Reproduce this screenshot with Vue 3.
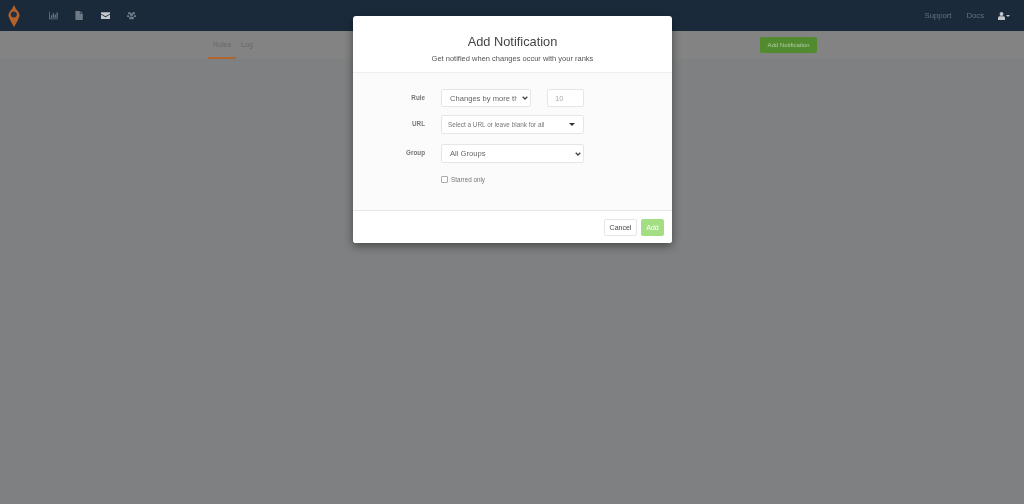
<template>
  <div class="page">
    <header class="navbar">
      <svg class="logo soft" viewBox="0 0 12 22">
        <path d="M6 0 L8 4 Q12 8 11.500 11 Q10 16 6 22 Q2 16 .5 11 Q0 8 4 4 Z" fill="#b5622a" />
        <circle cx="5.800" cy="9.500" r="3" fill="#1f3147" />
      </svg>
      <nav class="nav-icons soft">
        <svg viewBox="0 0 12 10" class="nav-icon"><path d="M0 0h1v9h11v1H0zM2.500 4.500h1.600V8H2.500zM5 2h1.600v6H5zM7.500 3.500h1.600V8H7.500zM10 1h1.600v7H10z" /></svg>
        <svg viewBox="0 0 10 11" class="nav-icon"><path d="M0 0h5.500v3.500H9V11H0zM6.300 0 9 2.700H6.300z" /></svg>
        <svg viewBox="0 0 12 9" class="nav-icon bright"><path d="M0 0h12v2L6 5.500 0 2zM0 3.200 6 6.700l6-3.500V9H0z" /></svg>
        <svg viewBox="0 0 12 10" class="nav-icon"><circle cx="3.200" cy="2" r="1.800" /><circle cx="8.800" cy="2" r="1.800" /><circle cx="6" cy="4" r="2" /><path d="M0 4.500h2.500L3 7H0zM9.500 4.500H12V7H9zM3 6.500h6V10H3z" /></svg>
      </nav>
      <div class="nav-right soft">
        <span>Support</span>
        <span>Docs</span>
        <span class="user">
          <svg viewBox="0 0 8 9" class="user-icon"><circle cx="4" cy="2.200" r="2.200" /><path d="M0 9V6.500Q0 5 1.800 4.800h4.400Q8 5 8 6.500V9z" /></svg>
          <i class="caret"></i>
        </span>
      </div>
    </header>
    <div class="subnav">
      <div class="tabs">
        <span class="tab active"><span class="soft">Rules</span></span>
        <span class="tab"><span class="soft">Log</span></span>
      </div>
      <button class="add-top"><span class="soft">Add Notification</span></button>
    </div>

    <div class="modal">
      <div class="modal-head">
        <h2>Add Notification</h2>
        <p>Get notified when changes occur with your ranks</p>
      </div>
      <form class="modal-body" @submit.prevent>
        <div class="row row-rule">
          <label>Rule</label>
          <div class="rule-fields">
            <select class="field select rule-select">
              <option>Changes by more than</option>
            </select>
            <input class="field num" type="text" placeholder="10" />
          </div>
        </div>
        <div class="row row-url">
          <label>URL</label>
          <div class="field fake-select">
            <span>Select a URL or leave blank for all</span>
            <i class="caret dark"></i>
          </div>
        </div>
        <div class="row row-group">
          <label>Group</label>
          <select class="field select">
            <option>All Groups</option>
          </select>
        </div>
        <div class="row row-check">
          <span></span>
          <label class="check"><input type="checkbox" /> Starred only</label>
        </div>
      </form>
      <div class="modal-foot">
        <button class="btn">Cancel</button>
        <button class="btn primary">Add</button>
      </div>
    </div>
  </div>
</template>

<script setup>
</script>

<style>
html, body { margin: 0; background: #7f8081; }
</style>

<style scoped>
* { box-sizing: border-box; }
.page {
  position: relative;
  height: 504px;
  overflow: hidden;
  background: #7f8081;
  font-family: "Liberation Sans", Arial, sans-serif;
}
.soft { filter: blur(0.6px); }
.navbar {
  height: 31px;
  background: #1b2a3b;
  display: flex;
  align-items: center;
  padding-left: 8px;
  padding-right: 14px;
}
.logo { width: 12px; height: 22px; }
.nav-icons { display: flex; align-items: center; gap: 17px; margin-left: 29px; }
.nav-icon { width: 9px; height: 9px; fill: #6f7a85; }
.nav-icon.bright { fill: #c4c8cc; }
.nav-right {
  margin-left: auto;
  display: flex;
  align-items: center;
  gap: 15px;
  font-size: 7.700px;
  color: #65717e;
}
.user { display: flex; align-items: center; gap: 1px; margin-left: -1px; }
.user-icon { width: 7px; height: 8px; fill: #c4c8cc; }
.caret {
  display: inline-block;
  width: 0;
  height: 0;
  border: 2.500px solid transparent;
  border-top-color: #c4c8cc;
  border-bottom: 0;
}
.subnav {
  height: 28px;
  background: #838383;
  display: flex;
  align-items: stretch;
  padding-left: 208px;
  padding-right: 207px;
}
.tabs { display: flex; font-size: 7.200px; color: #64676b; }
.tab { display: flex; align-items: center; padding: 0 5px; border-bottom: 2px solid transparent; }
.tab.active { border-bottom-color: #b0652f; width: 28px; }
.add-top {
  margin-left: auto;
  align-self: flex-start;
  margin-top: 6px;
  width: 57px;
  height: 16px;
  padding: 0;
  border: 0;
  border-radius: 2px;
  background: #528a30;
  color: #b4cca6;
  font: 6px "Liberation Sans", Arial, sans-serif;
}

.modal {
  position: absolute;
  left: 353px;
  top: 16px;
  width: 319px;
  background: #fff;
  border-radius: 3px;
  box-shadow: 0 3px 10px rgba(0, 0, 0, 0.45);
  overflow: hidden;
  filter: blur(0.25px);
}
.modal-head {
  height: 57px;
  padding-top: 18px;
  text-align: center;
  border-bottom: 1px solid #eee;
}
.modal-head h2 { margin: 0; font-size: 12.800px; font-weight: 400; line-height: 15px; color: #444; }
.modal-head p { margin: 5px 0 0; font-size: 7.500px; line-height: 10px; color: #555; }

.modal-body {
  height: 138px;
  background: #fbfbfb;
  border-bottom: 1px solid #e8e8e8;
  padding-top: 16px;
}
.row { display: grid; grid-template-columns: 72px 143px; column-gap: 16px; align-items: center; }
.row > label:first-child {
  justify-self: end;
  padding-bottom: 2px;
  font-size: 6.300px;
  font-weight: 700;
  color: #777;
}
.row-url { margin-top: 8px; }
.row-group { margin-top: 10px; }
.row-check { margin-top: 13px; }
.field {
  height: 18px;
  width: 100%;
  margin: 0;
  border: 1px solid #e6e6e6;
  border-radius: 2px;
  background: #fff;
  font: 7.600px "Liberation Sans", Arial, sans-serif;
  color: #666;
  padding: 0 0 0 8px;
}
.select {
  appearance: none;
  background: #fff url("data:image/svg+xml,%3Csvg xmlns='http://www.w3.org/2000/svg' viewBox='0 0 6 4'%3E%3Cpath d='M.7.7 3 3l2.300-2.300' fill='none' stroke='%23444' stroke-width='1.300'/%3E%3C/svg%3E") no-repeat right 2px center / 6px 4px;
}
.rule-fields { display: flex; justify-content: space-between; }
.rule-select { width: 90px; padding-right: 13px; }
.num { width: 37px; padding-left: 7px; }
.num::placeholder { color: #aaa; }
.fake-select {
  height: 19px;
  display: flex;
  align-items: center;
  justify-content: space-between;
  padding: 0 8px 0 6px;
  font-size: 6.400px;
  color: #777;
}
.caret.dark { border-width: 3px; border-bottom: 0; border-top-color: #333; }
.row-group .field { height: 19px; }
.check {
  display: flex;
  align-items: center;
  gap: 3px;
  font-size: 6.300px;
  color: #777;
}
.check input {
  appearance: none;
  width: 7px;
  height: 7px;
  margin: 0;
  border: 1px solid #aaa;
  border-radius: 1px;
  background: #fff;
}

.modal-foot {
  height: 32px;
  display: flex;
  justify-content: flex-end;
  align-items: flex-start;
  gap: 4px;
  padding: 8px 8px 0 0;
  background: #fff;
}
.btn {
  height: 17px;
  padding: 0;
  width: 33px;
  border: 1px solid #e6e6e6;
  border-radius: 2px;
  background: #fff;
  color: #444;
  font: 7px "Liberation Sans", Arial, sans-serif;
}
.btn.primary { width: 23px; background: #a3de82; border-color: #a3de82; color: #fff; }
</style>
